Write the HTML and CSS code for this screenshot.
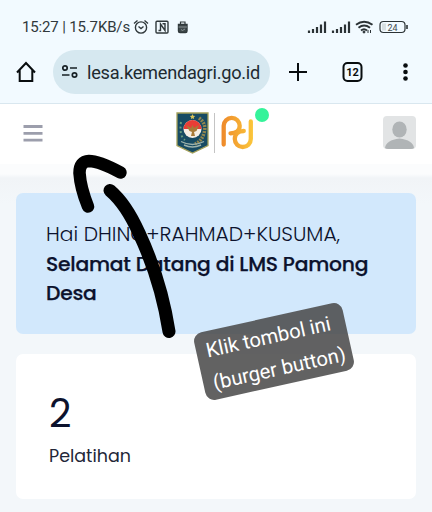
FILE: index.html
```
<!DOCTYPE html>
<html lang="id">
<head>
<meta charset="utf-8">
<title>LMS Pamong Desa</title>
<link rel="stylesheet" href="styles.css">
</head>
<body>
<div class="screen">
  <div class="status">
    <span class="clock">15:27 | 15.7KB/s</span>
    <svg class="status-left" width="58" height="18" viewBox="0 0 58 18" fill="none" stroke="#30383b" stroke-width="1.4">
      <circle cx="8" cy="9.5" r="5.6"/><path d="M1 5.500 4.500 2.500M11.500 2.500 15 5.500M5.500 8.500 8 10.500 10.500 8.500"/>
      <rect x="23" y="3.200" width="12" height="11.800" rx="1"/><path d="M25.500 12.500h2V6l4.500 6.500V5.700h-2.500"/>
      <path d="M45.500 6.500h8.500v6.500q0 1.500-1.500 1.500H47q-1.500 0-1.500-1.500z" fill="#3f484b"/><path d="M47.500 6V4h4.500v2" stroke-width="1.200"/><path d="M45.500 9h8.500M48 11.500l1.500 1 2.500-1.500" stroke="#a9b3b5" stroke-width=".7"/>
    </svg>
    <svg class="status-right" width="104" height="18" viewBox="0 0 104 18" fill="none" stroke="#2b3235">
      <path d="M2 12.500V15M6 11v4M10 9v6M14 6.500V15M18 3.500V15M26 12.500V15M30 11v4M34 9v6M38 6.500V15M42 3.500V15" stroke-width="2.200"/>
      <path d="M49 6.800q8-6 16.500 0M51.500 9.800q5.600-4.500 11.500 0M54 12.500q3-2.500 6 0" stroke-width="1.900"/><circle cx="57" cy="14" r="1" fill="#2b3235"/><path d="M61 12v3M63.500 12v3" stroke-width="1"/>
      <rect x="73" y="3.500" width="25" height="11" rx="3.500" stroke-width="1.200"/><path d="M75 5.500h4v7h-4z" fill="#d7dfe2" stroke="none"/><path d="M100 7v4" stroke-width="1.600"/>
      <text x="85.500" y="12.600" class="battery">24</text>
    </svg>
  </div>
  <div class="toolbar">
    <svg class="home" width="20" height="22" viewBox="0 0 20 22" fill="none" stroke="#090d0f" stroke-width="2"><path d="M1 11.500 10 2l9 9.500M3.700 9v11h12.600V9"/></svg>
    <div class="url">
      <svg width="18" height="16" viewBox="0 0 18 16" fill="none" stroke="#172025" stroke-width="1.700"><circle cx="4" cy="4" r="2.200"/><circle cx="13.500" cy="11" r="2.200"/><path d="M9 4h7M1 11h7.500"/></svg>
      <span class="address">lesa.kemendagri.go.id</span>
    </div>
    <svg class="actions" width="124" height="22" viewBox="0 0 124 22" fill="none" stroke="#090d0f" stroke-width="2"><path d="M0 11h18M9 2v18"/><rect x="54.500" y="2" width="18" height="18" rx="4"/><text x="63.500" y="15" class="tabs">12</text><g fill="#090d0f" stroke="none"><circle cx="116.500" cy="4.500" r="2.300"/><circle cx="116.500" cy="11" r="2.300"/><circle cx="116.500" cy="17.500" r="2.300"/></g></svg>
  </div>
  <header class="header">
    <svg class="burger" width="20" height="20" viewBox="0 0 20 20" stroke="#9c9eac" stroke-width="2.800"><path d="M.5 3.500h19M.5 10.300h19M.5 17.100h19"/></svg>
    <svg class="brand" width="96" height="50" viewBox="0 0 96 50">
      <path d="M2 5h31v32.500L17.500 45 2 37.500z" fill="#174b63" stroke="#a4a05a" stroke-width="1.300"/>
      <path d="M6 14q-2 14 4 18" fill="none" stroke="#679d7f" stroke-width="2" stroke-dasharray="2 2.500"/>
      <path d="M24 10q8 6 5 15-2 8-9 11" fill="none" stroke="#91864f" stroke-width="3.500" stroke-dasharray="2 1"/>
      <circle cx="17.500" cy="21" r="9" fill="#f5eee4"/><path d="M8.500 21a9 9 0 0 1 18 0z" fill="#e83d36"/>
      <path d="m11 17 5 3 1.500-3 1.500 3 5-3-2.500 6-2.500 1 1 4h-4l1-4-2.500-1z" fill="#a77a38"/>
      <path d="m17.500 6 .8 1.700 1.900.3-1.400 1.200.3 1.900-1.600-.9-1.600.9.300-1.900-1.400-1.200 1.900-.3z" fill="#d8c35a"/>
      <path d="M6 33.500q11.500 6 23 0M9 37q8.500 4 17 0" fill="none" stroke="#9eb3ac" stroke-width="1.400"/>
      <path d="M39.500 5v40" stroke="#c4c4c4"/>
      <defs><linearGradient id="gold" x1="47" y1="0" x2="78" y2="0" gradientUnits="userSpaceOnUse"><stop stop-color="#ee8a2b"/><stop offset="1" stop-color="#fbc63b"/></linearGradient></defs>
      <g fill="none" stroke="url(#gold)" stroke-width="4.300" stroke-linecap="round"><path d="M48.700 36.500V17.800a8 8 0 0 1 16 0c0 4.500-3.500 7.500-9.200 7.500"/><path d="M75.800 13.500v17.500a8 8 0 0 1-16 0c0-5 3.500-8 9-8"/></g>
      <circle cx="87" cy="7" r="7" fill="#35f39a"/>
    </svg>
    <svg class="avatar" width="33" height="33" viewBox="0 0 33 33"><rect width="33" height="33" rx="4" fill="#e2e4e5"/><ellipse cx="16.500" cy="13.500" rx="7.200" ry="8" fill="#b0b4b6"/><path d="M2 32q1-8 14.500-9.500Q30 24 31 32q-1 1-3 1H5q-2 0-3-1z" fill="#b0b4b6"/></svg>
  </header>
  <main class="content">
    <section class="card welcome">
      <div class="greeting">Hai DHINO+RAHMAD+KUSUMA,</div>
      <div class="title">Selamat Datang di LMS Pamong</div>
      <div class="title">Desa</div>
    </section>
    <section class="card stats"><div class="number">2</div><div class="label">Pelatihan</div></section>
  </main>
  <svg class="arrow" width="432" height="512" viewBox="0 0 432 512" fill="none" stroke="#000" stroke-linecap="round" stroke-linejoin="round"><path d="M120.500 172.500Q99 161 89 161 79.500 161.500 79.500 173 80.500 188 88 206.500" stroke-width="12.500"/><path d="M110 190.500Q126 204 139 233 161 280 169 331.500" stroke-width="13"/></svg>
  <div class="note">Klik tombol ini<br>(burger button)</div>
</div>
</body>
</html>
```
FILE: styles.css
```
* { box-sizing: border-box; }
body { margin: 0; }
svg { display: block; flex: none; }
.screen { position: relative; width: 432px; height: 512px; overflow: hidden; background: #f3f7fa; }
.status { display: flex; align-items: center; height: 46px; padding: 8px 0 0 22px; background: #f2faff; font: 15px Roboto, sans-serif; color: #30383b; }
.clock { width: 111px; white-space: nowrap; letter-spacing: -.15px; }
.status-right { margin-left: 116px; }
.battery { font: 9px Roboto, sans-serif; text-anchor: middle; fill: #444b4e; stroke: none; }
.toolbar { display: flex; align-items: center; height: 57px; padding: 0 0 5px 16px; background: #f2faff; }
.url { display: flex; align-items: center; width: 217px; height: 44px; margin: 0 19px 0 17px; padding-left: 8px; border-radius: 22px; background: #d6e8f0; }
.address { margin-left: 8px; white-space: nowrap; font: 18.2px Roboto, sans-serif; letter-spacing: -.25px; color: #202a30; }
.tabs { font: bold 11px Roboto, sans-serif; text-anchor: middle; fill: #090d0f; stroke: none; }
.header { display: flex; align-items: center; height: 61px; padding: 0 0 2px 23px; background: #fff; border-top: 1px solid #d9e7ef; }
.brand { margin-left: 132px; }
.avatar { margin: -2px 0 0 112px; }
.content { display: flex; flex-direction: column; gap: 20px; padding: 29px 16px 0; background: linear-gradient(#fbfcfd 0 10px, #f1f4f7 14px, #f3f7fa 40px); font-family: Poppins, Inter, sans-serif; color: #0c122d; }
.card { border-radius: 7px; }
.welcome { height: 141px; padding: 27px 30px; background: #d2e8fc; line-height: 29.5px; font-size: 20.3px; white-space: nowrap; }
.greeting { font-weight: 300; }
.title { font-weight: 500; letter-spacing: -.23px; -webkit-text-stroke: .25px #0c122d; }
.stats { height: 145px; padding: 36px 33px; background: #fff; }
.number { font-size: 39px; line-height: 48px; }
.label { margin-top: 5px; font-size: 17.500px; line-height: 26px; color: #222637; }
.arrow { position: absolute; left: 0; top: 0; }
.note { position: absolute; left: 198px; top: 317px; width: 152px; height: 69px; padding: 3px 0 0 10px; border-radius: 9px; background: rgba(75,75,75,.87); color: #fff; font: 20.2px/33px Roboto, sans-serif; white-space: nowrap; transform: rotate(-12.500deg); }
```
